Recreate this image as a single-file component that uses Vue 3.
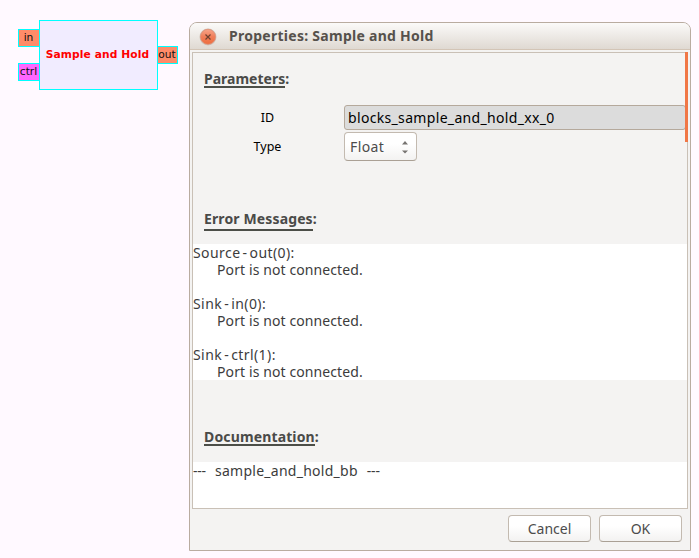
<script setup>
const messages = [
  { source: 'Source - out(0):' },
  { source: 'Sink - in(0):' },
  { source: 'Sink - ctrl(1):' },
]
</script>

<template>
  <main class="canvas">
    <div class="block">Sample and Hold</div>
    <div class="port port-in">in</div>
    <div class="port port-ctrl">ctrl</div>
    <div class="port port-out">out</div>

    <section class="dialog">
      <header class="titlebar">
        <svg class="close" width="18" height="18" viewBox="0 0 18 18">
          <defs>
            <linearGradient id="closeFill" x1="0" y1="0" x2="0" y2="1">
              <stop offset="0" stop-color="#f7a58a" />
              <stop offset="0.5" stop-color="#f07d58" />
              <stop offset="1" stop-color="#ee6e3e" />
            </linearGradient>
          </defs>
          <circle cx="9" cy="9" r="8.5" fill="#cfc4ba" />
          <circle cx="9" cy="8.8" r="7.5" fill="url(#closeFill)" stroke="#e08d72" stroke-width="0.8" />
          <path d="M6.5 6.5l5 5M11.5 6.5l-5 5" stroke="#70412f" stroke-width="1.2" fill="none" />
        </svg>
        <h1 class="title">Properties: Sample and Hold</h1>
      </header>

      <div class="body">
        <div class="scroll">
          <h2 class="heading h-params"><span>Parameters</span>:</h2>
          <div class="row row-id">
            <label>ID</label>
            <div class="entry">blocks_sample_and_hold_xx_0</div>
          </div>
          <div class="row row-type">
            <label>Type</label>
            <div class="select">
              <span>Float</span>
              <svg width="8" height="14" viewBox="0 0 8 14">
                <path d="M1 4.5L4 1l3 3.5zM1 10.5h6L4 13.5z" fill="#777471" />
              </svg>
            </div>
          </div>
          <h2 class="heading h-errors"><span>Error Messages</span>:</h2>
          <div class="errors">
            <div v-for="m in messages" :key="m.source" class="message">
              <p class="source">{{ m.source }}</p>
              <p class="detail">Port is not connected.</p>
            </div>
          </div>
          <h2 class="heading h-docs"><span>Documentation</span>:</h2>
          <div class="docs"><span class="dash">---</span><span class="doc-name">sample_and_hold_bb</span><span class="dash">---</span></div>
          <div class="thumb"></div>
        </div>
        <footer class="actions">
          <button class="cancel">Cancel</button>
          <button class="ok">OK</button>
        </footer>
      </div>
    </section>
  </main>
</template>

<style>
body { margin: 0; background: #fff9ff; }
</style>

<style scoped>
* { box-sizing: border-box; }
.canvas {
  position: relative;
  width: 699px;
  height: 558px;
  overflow: hidden;
  background: #fff9ff;
  font-family: "Noto Sans", sans-serif;
  font-size: 14px;
  color: #3c3c3c;
}
.block, .port {
  position: absolute;
  display: flex;
  align-items: center;
  justify-content: center;
  border: 1px solid #00ffff;
  font-family: "DejaVu Sans", sans-serif;
  white-space: nowrap;
}
.block {
  left: 39px; top: 20px; width: 119px; height: 70px;
  padding: 0 2px 2px 0;
  background: #f1ecff;
  color: #ff0000;
  font-size: 10.67px;
  letter-spacing: 0.12px;
  font-weight: bold;
}
.port {
  width: 22px; height: 18px;
  padding: 0 1px 2px 0;
  background: #ff8c69;
  color: #111;
  font-size: 10.67px;
}
.port-in { left: 18px; top: 29px; }
.port-ctrl { left: 18px; top: 63px; background: #ff66ff; }
.port-out { left: 157px; top: 46px; width: 21px; }

.dialog {
  position: absolute;
  left: 189px; top: 22px; width: 502px; height: 529px;
  border: 1px solid #b9aca0;
  border-radius: 8px 8px 0 0;
  background: #f4f3f2;
  overflow: hidden;
}
.titlebar {
  display: flex;
  align-items: center;
  height: 27px;
  padding-left: 9px;
  border-bottom: 1px solid #d3c5b6;
  background: linear-gradient(#fbfaf9, #dfd9d2);
}
.close { flex: none; margin-top: 1px; }
.title {
  margin: 0 0 0 12px;
  font-size: 14px;
  letter-spacing: 0.27px;
  line-height: 20px;
  font-weight: 700;
  color: #56514c;
  white-space: nowrap;
}
.body { padding: 2px; }
.scroll {
  position: relative;
  height: 457px;
  border: 1px solid #c9c0b6;
}
.heading {
  display: flex;
  width: max-content;
  margin: 0 0 0 11px;
  font-size: 14px;
  line-height: 18px;
  font-weight: 700;
  color: #4a4a48;
}
.heading span { border-bottom: 2px solid #4c4e48; }
.h-params { padding-top: 17px; height: 52px; }
.h-params span { height: 18px; }
.h-errors { padding-top: 48px; height: 82px; letter-spacing: 0.13px; }
.h-errors span { height: 21px; }
.h-docs { padding-top: 48px; height: 82px; letter-spacing: 0.14px; }
.h-docs span { height: 18px; }
.row { display: flex; align-items: center; }
.row label {
  width: 151px;
  padding-right: 2px;
  text-align: center;
  font-size: 12.5px;
  color: #000;
}
.row-id { height: 25px; }
.row-type { height: 32px; padding-top: 1px; }
.entry {
  width: 342px;
  height: 25px;
  padding-left: 3px;
  border: 1px solid #b5a99c;
  border-radius: 3px;
  background: #dcdcdc;
  color: #000;
  line-height: 24px;
  letter-spacing: 0.33px;
}
.select {
  display: flex;
  align-items: center;
  justify-content: space-between;
  width: 73px;
  height: 29px;
  padding: 0 7px 0 5px;
  border: 1px solid #c3bab0;
  border-bottom-color: #aaa095;
  border-radius: 4px;
  background: linear-gradient(#ffffff 40%, #f3f2f1);
  color: #4c4c4c;
  letter-spacing: 0.4px;
}
.errors { height: 136px; background: #fff; }
.message { height: 51px; }
.message p { margin: 0; line-height: 17px; height: 17px; white-space: nowrap; }
.message .source { letter-spacing: 0.42px; word-spacing: -2px; }
.message .detail { padding-left: 24px; letter-spacing: 0.1px; }
.docs {
  display: flex;
  gap: 9px;
  height: 46px;
  background: #fff;
  line-height: 18px;
}
.dash { width: 13px; letter-spacing: -0.2px; }
.doc-name { letter-spacing: 0.26px; }
.thumb {
  position: absolute;
  right: -1px; top: -1px;
  width: 3px; height: 90px;
  background: #f07746;
}
.actions {
  display: flex;
  justify-content: flex-end;
  gap: 8px;
  padding: 6px 6px 0 0;
}
.actions button {
  width: 83px;
  height: 27px;
  padding: 0;
  border: 1px solid #c3bab0;
  border-bottom-color: #aaa095;
  border-radius: 4px;
  background: linear-gradient(#ffffff 40%, #f3f2f1);
  font: inherit;
  color: #4c4c4c;
}
</style>
